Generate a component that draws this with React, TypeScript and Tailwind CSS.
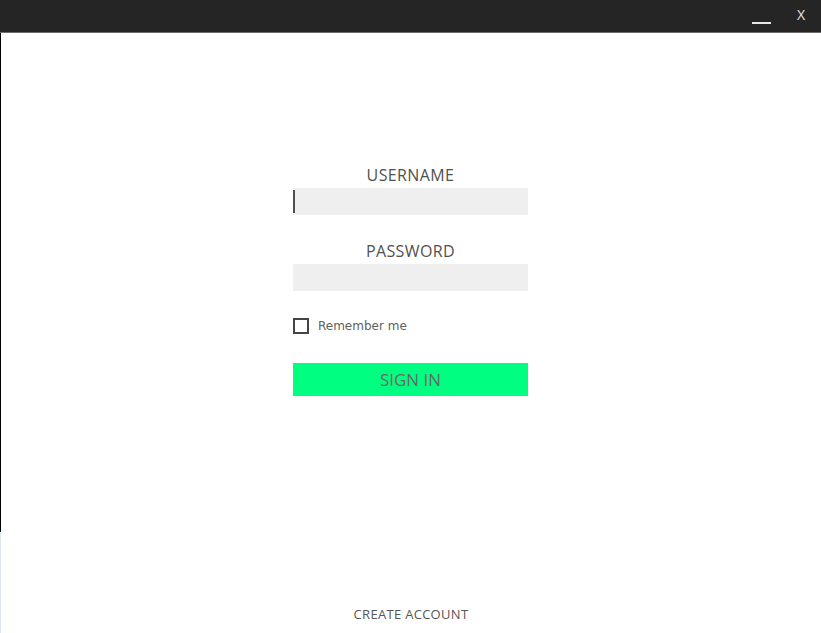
import React from "react";

export default function App() {
  return (
    <div className="w-[821px] h-[633px] bg-white flex flex-col overflow-hidden" style={{ fontFamily: '"Open Sans", "Noto Sans", sans-serif' }}>
      <div className="h-[32px] bg-[#252525] border-b border-[#6b6b6b] box-content flex items-start justify-end shrink-0">
        <div className="w-[36px] h-[32px] flex justify-center relative">
          <div className="absolute top-[22px] left-[7px] w-[19px] h-[2px] bg-[#e6e6e6]" />
        </div>
        <div className="w-[40px] h-[32px] flex justify-center pt-[6px] text-[14px] text-[#e6e6e6] leading-[18px]">X</div>
      </div>
      <div className="flex-1 flex">
        <div className="w-[1px] flex flex-col shrink-0">
          <div className="h-[499px] bg-black" />
          <div className="flex-1 bg-[#dce6f2]" />
        </div>
        <div className="flex-1 flex flex-col items-center">
          <div className="w-[235px] mt-[132px] mr-[1px] flex flex-col">
            <div className="text-center text-[16px] tracking-[0.4px] leading-[20px] text-[#505050] h-[20px]">USERNAME</div>
            <div className="mt-[3px] h-[27px] bg-[#efefef] relative">
              <div className="absolute left-0 top-[2px] w-[2px] h-[23px] bg-[#505050]" />
            </div>
            <div className="mt-[26px] text-center text-[16px] tracking-[0.4px] leading-[20px] text-[#505050] h-[20px]">PASSWORD</div>
            <div className="mt-[3px] h-[27px] bg-[#efefef]" />
            <div className="mt-[27px] flex items-center h-[16px]">
              <div className="w-[16px] h-[16px] border-2 border-[#454545] bg-white" />
              <span className="ml-[9px] text-[12px] text-[#606060]" style={{ fontFamily: '"DejaVu Sans", sans-serif' }}>Remember me</span>
            </div>
            <div className="mt-[29px] h-[33px] bg-[#00ff80] flex items-center justify-center text-[17px] text-[#6a6a6a]">SIGN IN</div>
          </div>
          <div className="flex-1" />
          <div className="mb-[10px] text-[13px] tracking-[0.3px] leading-[18px] text-[#555555]">CREATE ACCOUNT</div>
        </div>
      </div>
    </div>
  );
}
